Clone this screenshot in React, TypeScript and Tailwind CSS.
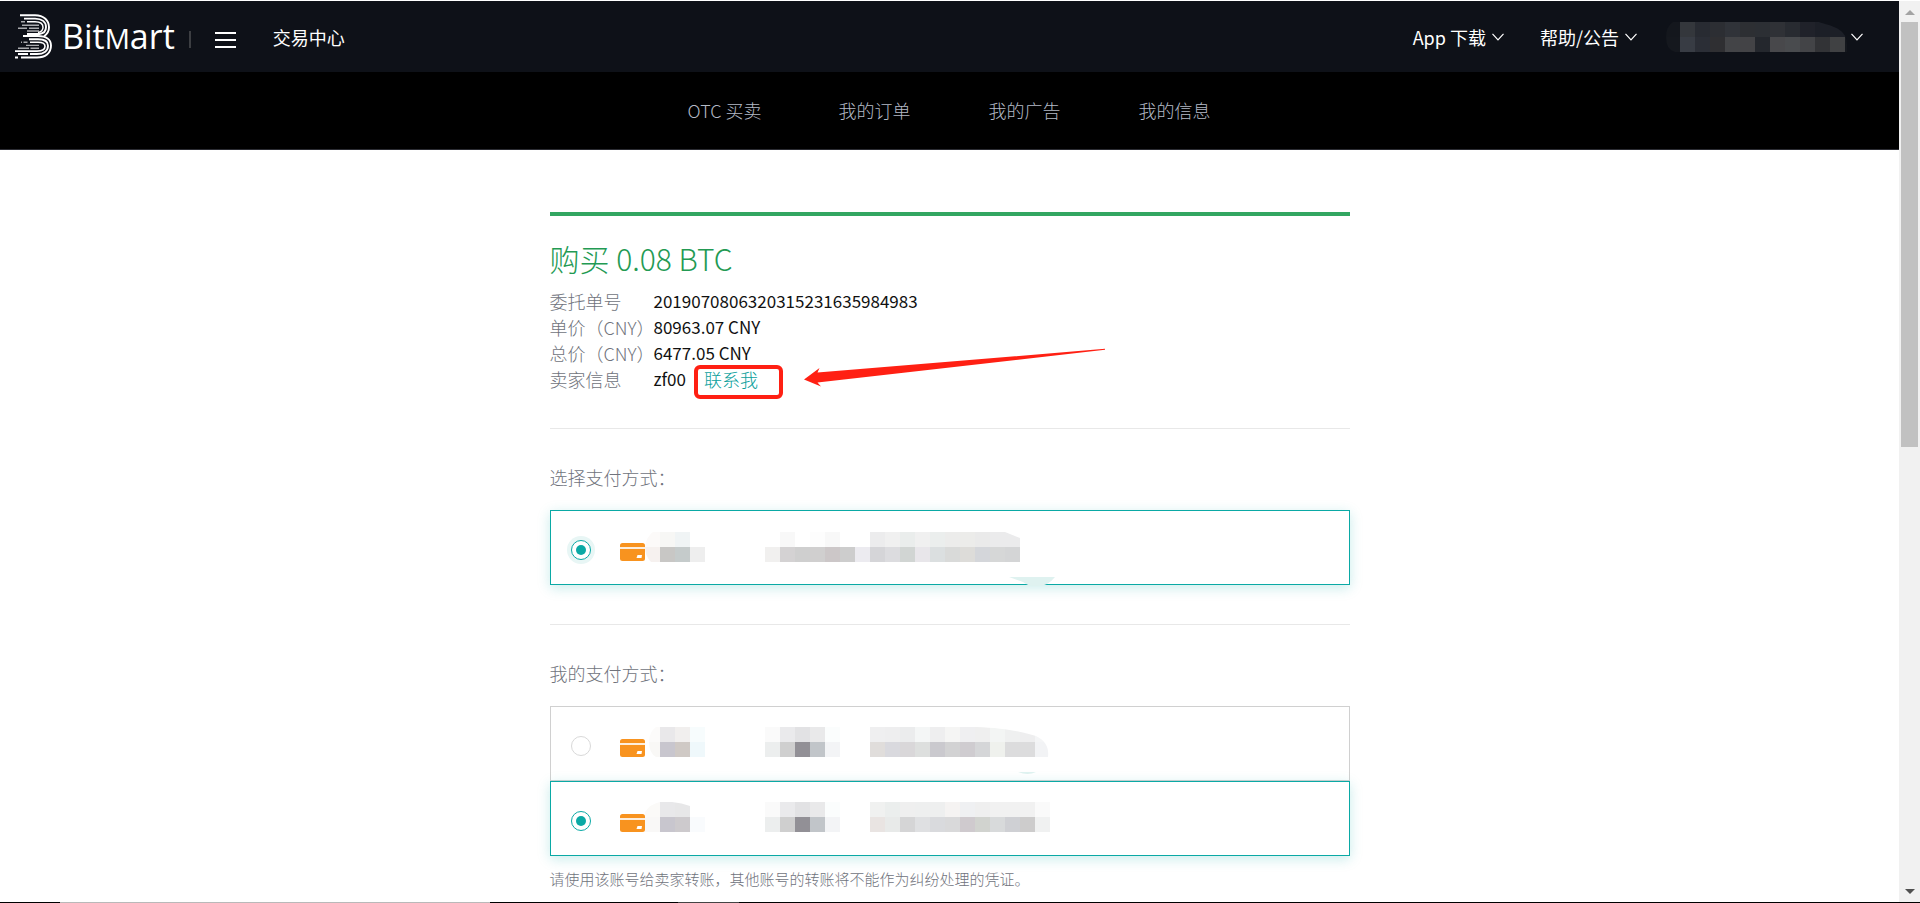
import { useState } from "react";

type Cells = { start: number; colors: string[] };

const CELL = 15;

const NAV_ITEMS = ["OTC 买卖", "我的订单", "我的广告", "我的信息"];

const ORDER_ROWS = [
  { label: "委托单号", value: "2019070806320315231635984983" },
  { label: "单价（CNY）", value: "80963.07 CNY" },
  { label: "总价（CNY）", value: "6477.05 CNY" },
];

const SELLER_TOP: Cells[] = [
  { start: 0, colors: ["#fcfaf9", "#f7f7f5", "#f0f4f5"] },
  { start: 9, colors: ["#f8f8f8", "#ffffff", "#fdfdfd", "#f8f8f8"] },
  { start: 15, colors: ["#ececed", "#f0f0f0", "#eaedec", "#f0f0f0", "#ebeeed", "#ececeb", "#ececea", "#eaeaea", "#ebebec", "#ebebec"] },
];
const SELLER_BOTTOM: Cells[] = [
  { start: 0, colors: ["#f6f1ef", "#c8c7c5", "#c5cbcb", "#eeeeee"] },
  {
    start: 8,
    colors: ["#f1f0ef", "#d4d2d3", "#cfcfcf", "#d0cfcf", "#ccc7c8", "#cdcdcd", "#ecebf0", "#d5d5d8", "#dcdcdf", "#d1d5d3", "#e8e6ea", "#dbdfe0", "#d9dad9", "#dddcd9", "#d4d6da", "#d6d7d7", "#d4d5d6"],
  },
];
const MINE_A_TOP: Cells[] = [
  { start: 0, colors: ["#fcfbfa", "#e9e8ea", "#f1efee", "#f7fcfd"] },
  { start: 8, colors: ["#fafafa", "#eaeaec", "#e2e2e4", "#e9e9ea", "#fbfdfd"] },
  { start: 15, colors: ["#efeff0", "#eeeeef", "#ebeced", "#f4f6f6", "#eeeeef", "#f5f5f4", "#efeff1", "#efefef", "#f3f5f4", "#eff0f0", "#eeeeef", "#f4f5f6"] },
];
const MINE_A_BOTTOM: Cells[] = [
  { start: 0, colors: ["#f9f8f6", "#c8c6ce", "#cfc9c5", "#eff8fb"] },
  { start: 8, colors: ["#eceeee", "#cfcfcf", "#929096", "#c1c5c9", "#f3f4f6"] },
  { start: 15, colors: ["#e0dddb", "#d9d9de", "#d9d7d9", "#dddfde", "#cac9ce", "#d2d2d3", "#cfccd0", "#d5d6d8", "#eff1ed", "#dcdcdd", "#dcdcdd", "#f2f3f5"] },
];
const MINE_B_TOP: Cells[] = [
  { start: 0, colors: ["#fbfaf8", "#e8e8ea", "#e7e7e8"] },
  { start: 8, colors: ["#fafafa", "#eaeaec", "#e2e2e4", "#e9e9ea", "#fbfdfd"] },
  { start: 15, colors: ["#f0f1f0", "#ebeeed", "#efefef", "#eeefef", "#eeefef", "#f5f3f2", "#eff0f2", "#efefef", "#f1f1f1", "#f1f1f1", "#f1f1f1", "#fafafa"] },
];
const MINE_B_BOTTOM: Cells[] = [
  { start: 0, colors: ["#f9f8f7", "#c8c6ce", "#cdcacd", "#f9fbfd"] },
  { start: 8, colors: ["#eceeee", "#cfcfcf", "#929096", "#c1c5c9", "#f3f4f6"] },
  { start: 15, colors: ["#e9e4e2", "#e8eae9", "#d5d5d6", "#dfe0e2", "#d9dadd", "#d9d9da", "#cfcace", "#d1d3cf", "#d8dadb", "#cfd0d4", "#cdcccc", "#f0f1f1"] },
];
const ACCOUNT_TOP: Cells[] = [
  { start: 0, colors: ["#14171d", "#34373c", "#282b32", "#2c2e33", "#303339", "#2d2f33", "#2c2f34", "#2f3136", "#282b31", "#20222a", "#1c1f27", "#1c1f27", "#181b22"] },
];
const ACCOUNT_BOTTOM: Cells[] = [
  { start: 0, colors: ["#15181e", "#383c44", "#2b2e36", "#2f2f32", "#434447", "#434346", "#24272d", "#48484b", "#494b4e", "#434447", "#323336", "#404143", "#14171d"] },
];

function CellRow({ groups, y }: { groups: Cells[]; y: number }) {
  return (
    <>
      {groups.flatMap((g) =>
        g.colors.map((c, i) => (
          <rect key={`${g.start}-${i}`} x={(g.start + i) * CELL} y={y} width={CELL} height={CELL} fill={c} />
        )),
      )}
    </>
  );
}

function Mosaic({ id, top, bottom, clip, y, smudge }: { id: string; top: Cells[]; bottom: Cells[]; clip: string; y: number; smudge?: string }) {
  return (
    <svg width="420" height="73" viewBox="0 0 420 73" className="shrink-0 overflow-visible" shapeRendering="crispEdges" aria-hidden="true">
      <clipPath id={id}>
        <path d={clip} transform={`translate(0 ${y})`} />
      </clipPath>
      <g clipPath={`url(#${id})`}>
        <CellRow groups={top} y={y} />
        <CellRow groups={bottom} y={y + CELL} />
      </g>
      {smudge && <path d={smudge} fill="#dff2f0" shapeRendering="auto" />}
    </svg>
  );
}

function CardIcon() {
  return (
    <svg width="25" height="22" viewBox="0 0 25 22" className="shrink-0" aria-hidden="true">
      <path d="M2.5 4h20A2.5 2.5 0 0 1 25 6.500V8H0V6.500A2.500 2.500 0 0 1 2.500 4Z" fill="#f8931f" />
      <path d="M0 8h25v2H0Z" fill="#fdeedd" />
      <path d="M0 10h25v9.500A2.500 2.500 0 0 1 22.500 22h-20A2.500 2.500 0 0 1 0 19.500Z" fill="#f8931f" />
      <path d="M17.500 16h4.500l-.5 3h-5Z" fill="#fff" />
    </svg>
  );
}

function Chevron() {
  return (
    <svg width="12" height="8" viewBox="0 0 12 8" fill="none" stroke="#fff" strokeWidth="1.200" className="shrink-0" aria-hidden="true">
      <path d="M.5 .8 6 6.800l5.500-6" />
    </svg>
  );
}

function LogoMark() {
  return (
    <svg width="37" height="45" viewBox="0 0 37 45" fill="none" stroke="#fff" aria-hidden="true">
      <g strokeWidth="1.900">
        <path d="M5 1.200h15c9 0 14 5.500 14 12 0 4.500-2 7-5 9" />
        <path d="M9 4.600h11c7 0 11 3.500 11 8.500 0 4-2.500 6.500-6.500 6.900H12" />
        <path d="M12 7.800h8c5 0 8 2 8 5.500 0 3-2 4.700-5 5.200" strokeWidth="1.500" />
        <path d="M8 22h15c8 0 13 3.500 13 9.500 0 8-6 12-14 12H6" />
        <path d="M14 25.200h9c6 0 10 2 10 6.500 0 5.500-4.500 8.300-11 8.300h-7" />
        <path d="M15 28.200h8c4 0 7 1.200 7 4 0 3.500-3.500 4.900-8 4.900H0" strokeWidth="1.600" />
        <path d="M3 40h10M0 43.500h3" />
      </g>
      <g strokeWidth="1.400" opacity=".65">
        <path d="M6 7.800h4M7 11.200h17M3 14.200h9M14 14.200h10M12 17h12M6 28.300h1M8.500 28.300h4M11 31.400h13M3 34.300h11M15.500 34.300H24" />
      </g>
    </svg>
  );
}

type OptionProps = {
  id: string;
  group: string;
  checked: boolean;
  onSelect: () => void;
  label: string;
  halo?: boolean;
  children: React.ReactNode;
};

function PaymentOption({ id, group, checked, onSelect, label, halo, children }: OptionProps) {
  return (
    <label
      htmlFor={id}
      className={
        checked
          ? "relative flex h-[75px] cursor-pointer items-center border border-[#0aa9a5] bg-white pl-5 shadow-[0_3px_12px_rgba(10,169,165,0.22)]"
          : "flex h-[75px] cursor-pointer items-center border border-[#d0d0d0] bg-white pl-5"
      }
    >
      <input
        id={id}
        type="radio"
        name={group}
        checked={checked}
        onChange={onSelect}
        aria-label={label}
        className={
          halo
            ? "mt-1 grid size-5 shrink-0 appearance-none place-content-center rounded-full border border-[#0aa9a5] bg-white shadow-[0_0_0_4px_#e8f6f5] before:size-2.5 before:rounded-full checked:before:bg-[#0aa9a5]"
            : "mt-1 grid size-5 shrink-0 appearance-none place-content-center rounded-full border border-[#d9d9d9] bg-white before:size-2.5 before:rounded-full checked:border-[#0aa9a5] checked:before:bg-[#0aa9a5]"
        }
      />
      <span className="ml-[29px] mt-1 flex">
        <CardIcon />
      </span>
      {children}
    </label>
  );
}

export default function App() {
  const [mine, setMine] = useState("b");
  return (
    <div className="flex min-h-screen bg-white font-['Noto_Sans_CJK_SC',sans-serif] text-[17px]">
      <div className="flex min-w-0 flex-1 flex-col">
        <header className="mt-px flex h-[71px] items-center bg-[#0e1118] pr-9 pl-[15px] text-lg text-white">
          <a href="#" className="flex items-center gap-2.5" aria-label="BitMart">
            <LogoMark />
            <span className="font-['Open_Sans','Noto_Sans',sans-serif] text-[34px] leading-9">
              Bit<span className="text-[28px]">M</span>art
            </span>
          </a>
          <span className="mt-1.5 ml-3.5 h-[17px] w-0.5 bg-[#3c3e42]" />
          <button type="button" aria-label="菜单" className="mt-1.5 ml-6 flex w-[21px] flex-col gap-[5px]">
            <span className="h-0.5 bg-white" />
            <span className="h-0.5 bg-white" />
            <span className="h-0.5 bg-white" />
          </button>
          <a href="#" className="ml-[37px]">交易中心</a>
          <div className="ml-auto flex items-center">
            <button type="button" className="flex items-center gap-1.5">
              App 下载 <Chevron />
            </button>
            <button type="button" className="ml-9 flex items-center gap-1.5">
              帮助/公告 <Chevron />
            </button>
            <button type="button" aria-label="账户" className="ml-7 flex items-center gap-1">
              <svg width="182" height="30" viewBox="0 0 182 30" shapeRendering="crispEdges" aria-hidden="true">
                <clipPath id="account">
                  <path d="M8 0h146c6 3 28 4 28 22v8H10Q1 28 1 15 1 4 8 0Z" />
                </clipPath>
                <g clipPath="url(#account)">
                  <CellRow groups={ACCOUNT_TOP} y={0} />
                  <CellRow groups={ACCOUNT_BOTTOM} y={CELL} />
                </g>
              </svg>
              <Chevron />
            </button>
          </div>
        </header>

        <nav className="flex h-[78px] items-center justify-center border-b border-[#2b2c33] bg-black pb-0.5 text-lg font-light text-[#b4bac6]">
          {NAV_ITEMS.map((item) => (
            <a key={item} href="#" className="w-[150px] text-center">
              {item}
            </a>
          ))}
        </nav>

        <main className="mx-auto w-full max-w-[800px] flex-1 pt-[62px]">
          <section className="relative border-t-4 border-[#32a661]">
            <h1 className="pt-[22px] text-[30px] leading-10 font-light text-[#239a53]">购买 0.08 BTC</h1>
            <dl className="mt-2.5 leading-[26px]">
              {ORDER_ROWS.map((row) => (
                <div key={row.label} className="flex">
                  <dt className="w-[104px] shrink-0 text-lg leading-[26px] font-light whitespace-nowrap text-[#70737c]">{row.label}</dt>
                  <dd className="text-[#111]">{row.value}</dd>
                </div>
              ))}
              <div className="flex">
                <dt className="w-[104px] shrink-0 text-lg leading-[26px] font-light text-[#70737c]">卖家信息</dt>
                <dd className="relative flex gap-[18px] text-[#111]">
                  zf00
                  <a href="#" className="relative text-lg leading-[26px] font-light text-[#0aa09c]">
                    联系我
                    <span className="absolute -top-px -left-2.5 h-[34px] w-[89px] rounded-md border-4 border-[#ff2013]" />
                  </a>
                </dd>
              </div>
            </dl>
            <svg width="302" height="40" viewBox="0 0 302 40" className="absolute top-[132px] left-[254px]" aria-hidden="true">
              <path d="M0 31.500 15.500 20 13.500 24.500 301 .8v1L13.500 34.500 17 38.500Z" fill="#ff2013" />
            </svg>
          </section>

          <section className="mt-9 border-t border-[#e8e8e8] pt-[35px]">
            <h2 className="text-lg leading-[26px] font-light text-[#70737c]">选择支付方式：</h2>
            <div className="mt-5">
              <PaymentOption id="seller-card" group="seller" label="银行卡" checked onSelect={() => undefined} halo>
                <Mosaic
                  id="seller"
                  top={SELLER_TOP}
                  bottom={SELLER_BOTTOM}
                  y={21}
                  clip="M8 0h352l15 6v24H6Q0 24 0 14 2 4 8 0Z"
                  smudge="M364 66h46q-7 9-17 9h-4q-6 0-11-4Z"
                />
              </PaymentOption>
            </div>
          </section>

          <section className="mt-[39px] border-t border-[#e8e8e8] pt-[35px]">
            <h2 className="text-lg leading-[26px] font-light text-[#70737c]">我的支付方式：</h2>
            <div className="mt-5">
              <PaymentOption id="mine-a" group="mine" label="银行卡一" checked={mine === "a"} onSelect={() => setMine("a")}>
                <Mosaic
                  id="mine-first"
                  top={MINE_A_TOP}
                  bottom={MINE_A_BOTTOM}
                  y={20}
                  clip="M11 0h320c30 1 47 5 60 9 10 5 13 12 12 21H11Q4 26 4 15 4 5 11 0Z"
                  smudge="M373 65h18q-8 4-18 0Z"
                />
              </PaymentOption>
              <PaymentOption id="mine-b" group="mine" label="银行卡二" checked={mine === "b"} onSelect={() => setMine("b")}>
                <Mosaic
                  id="mine-second"
                  top={MINE_B_TOP}
                  bottom={MINE_B_BOTTOM}
                  y={20}
                  clip="M0 10Q5 2 15 0h12Q37 1 45 4L60 0h345v30H0Z"
                />
              </PaymentOption>
            </div>
            <p className="mt-[11px] text-[15px] leading-6 font-light text-[#70737c]">
              请使用该账号给卖家转账，其他账号的转账将不能作为纠纷处理的凭证。
            </p>
          </section>
        </main>

        <footer className="flex h-px bg-black">
          <span className="ml-[60px] w-[430px] bg-[#b9b9b9]" />
          <span className="ml-[188px] w-[61px] bg-[#444]" />
        </footer>
      </div>

      <div className="mt-px flex w-[21px] shrink-0 flex-col items-center border-b border-black bg-[#f1f1f1]" aria-hidden="true">
        <svg width="10" height="21" viewBox="0 0 10 21">
          <path d="M5 9l5 5H0Z" fill="#a3a3a3" />
        </svg>
        <span className="h-[425px] w-[17px] bg-[#c1c1c1]" />
        <svg width="10" height="21" viewBox="0 0 10 21" className="mt-auto">
          <path d="M0 8h10l-5 5Z" fill="#505050" />
        </svg>
      </div>
    </div>
  );
}
